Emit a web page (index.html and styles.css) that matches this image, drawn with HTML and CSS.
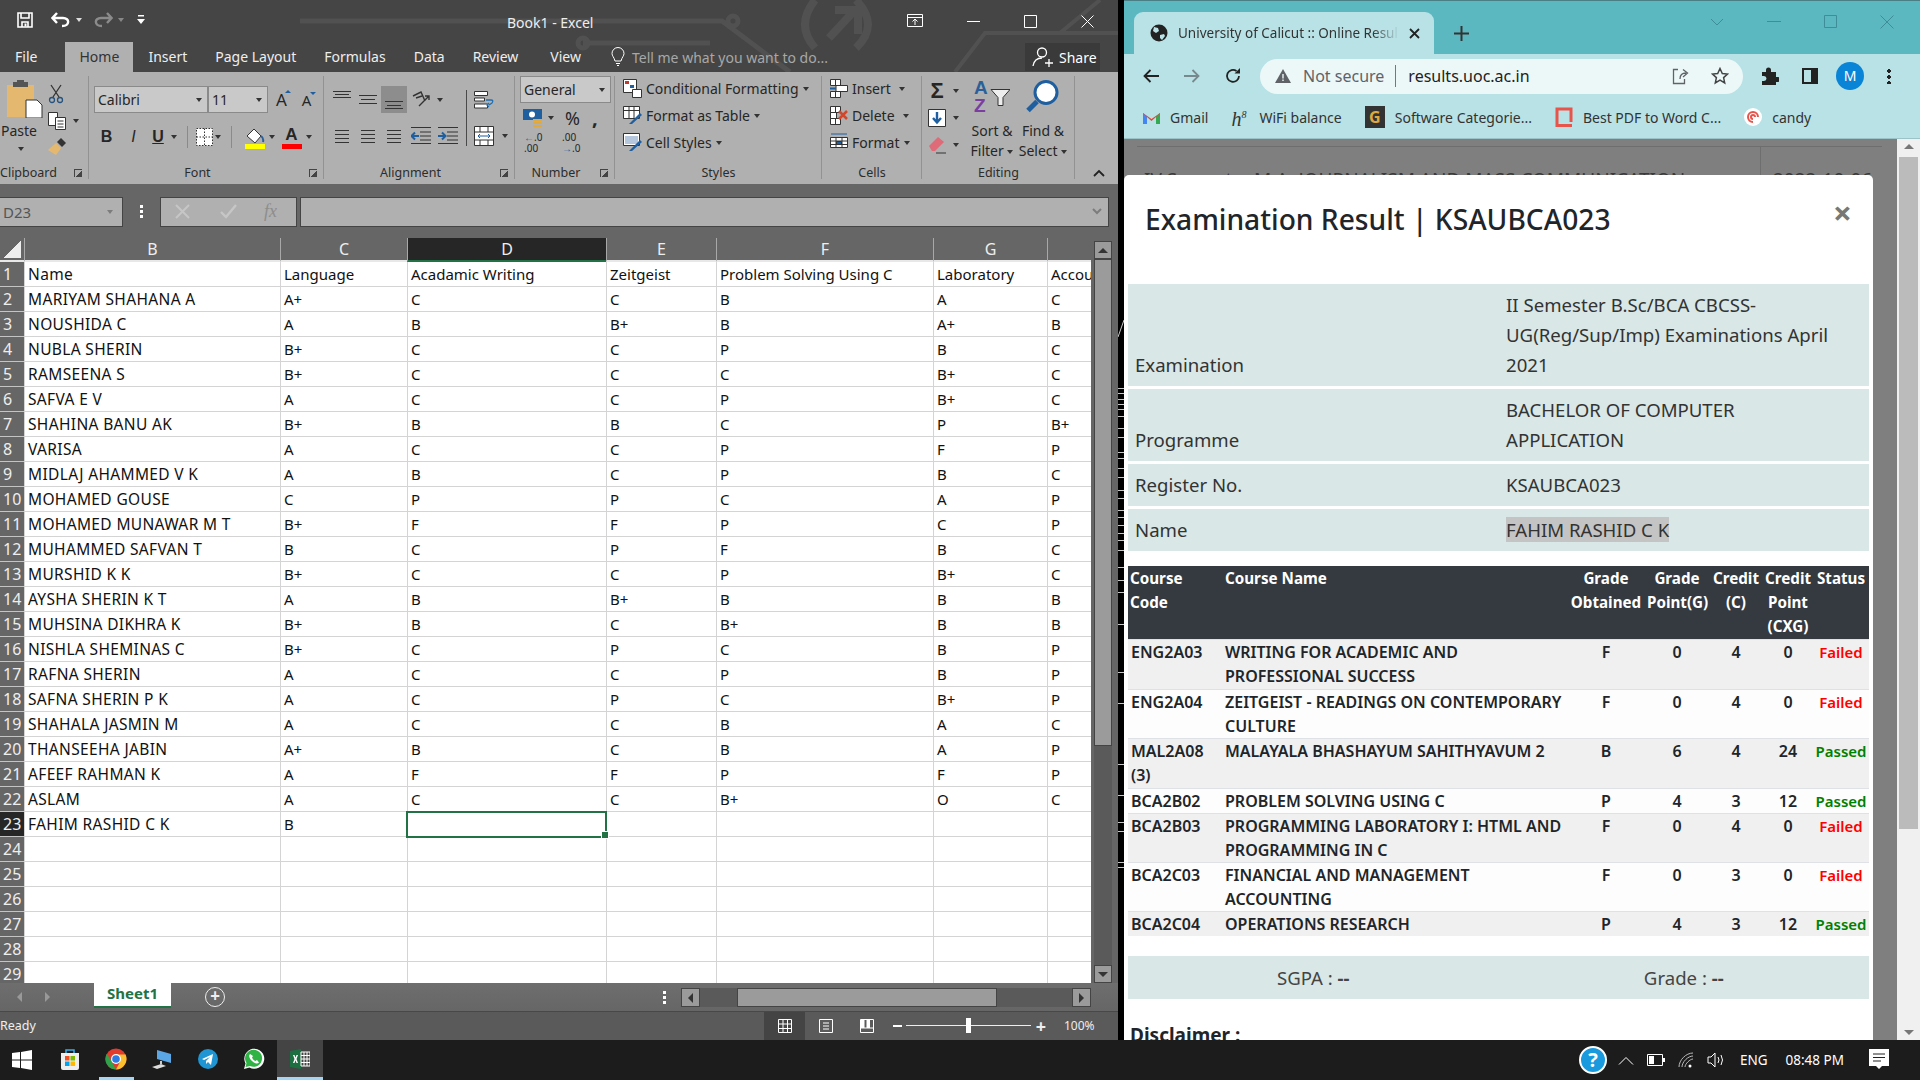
FILE: index.html
```html
<!DOCTYPE html>
<html lang="en">
<head>
  <meta charset="UTF-8">
  <title>Book1 - Excel</title>
  <link rel="stylesheet" href="styles.css">
</head>
<body>
  <div class="desktop">
    <div class="excel">
      <svg class="title-art" width="1118" height="72" viewBox="0 0 1118 72" fill="none" stroke="#515151" stroke-width="5">
        <path d="M300 21H722L790 72M733 21m-5 0a5 5 0 1 0 10 0a5 5 0 1 0-10 0M583 43H710M583 43m-5 0a5 5 0 1 0 10 0a5 5 0 1 0-10 0"/>
        <path d="M815 0Q795 25 815 48M856 0Q880 25 856 48M829 38L855 10M835 10H858V34" stroke-width="8"/>
        <path d="M955 72L985 33H1118M1060 33L1100 0" stroke-width="4"/>
      </svg>
      <div class="title-bar">
        <div class="qat">
          <svg width="18" height="18" viewBox="0 0 18 18" fill="none" stroke="#fff" stroke-width="1.6"><path d="M2 2H16V16H2zM5 2V7H13V2M6 16V11H12V16"/><path d="M8.500 12.500h2v3h-2z" fill="#fff" stroke="none"/></svg>
          <svg width="20" height="18" viewBox="0 0 20 18" fill="none" stroke="#fff" stroke-width="2.400"><path d="M2 7H12C19 7 19 15 11 15M6 2L1.500 7L6 12"/></svg>
          <span class="caret light"></span>
          <svg width="20" height="18" viewBox="0 0 20 18" fill="none" stroke="#8b8b8b" stroke-width="2.400"><path d="M18 7H8C1 7 1 15 9 15M14 2L18.500 7L14 12"/></svg>
          <span class="caret dim"></span>
          <svg width="8" height="10" viewBox="0 0 8 10" fill="#fff"><path d="M1 0h6v1.500H1zM0 4h8L4 9z"/></svg>
        </div>
        <div class="doc-title">Book1 - Excel</div>
        <div class="win-btns">
          <svg width="16" height="14" viewBox="0 0 16 14" fill="none" stroke="#fff"><path d="M.5.500h15v12H.5zM.5 3.500h15M8 11V5M5.500 7.500L8 5l2.500 2.500"/></svg>
          <svg width="13" height="3" viewBox="0 0 13 3" fill="#fff"><path d="M0 1h13v1H0z"/></svg>
          <svg width="13" height="13" viewBox="0 0 13 13" fill="none" stroke="#fff"><path d="M.5.500h12v12H.5z"/></svg>
          <svg width="13" height="13" viewBox="0 0 13 13" fill="none" stroke="#fff"><path d="M.5.500l12 12M12.500.500l-12 12"/></svg>
        </div>
      </div>
      <div class="tab-bar">
        <span class="tab file">File</span>
        <span class="tab active">Home</span>
        <span class="tab">Insert</span>
        <span class="tab">Page Layout</span>
        <span class="tab">Formulas</span>
        <span class="tab">Data</span>
        <span class="tab">Review</span>
        <span class="tab view">View</span>
        <span class="tell">
          <svg width="14" height="20" viewBox="0 0 14 20" fill="none" stroke="#fff"><path d="M4 14C3 10 1 9 1 6.500A6 6 0 0 1 13 6.500C13 9 11 10 10 14zM5 16.500h4M6 18.500h2"/></svg>
          Tell me what you want to do...
        </span>
        <span class="share">
          <svg width="22" height="22" viewBox="0 0 22 22" fill="none" stroke="#fff" stroke-width="1.300"><circle cx="10" cy="6.500" r="4.500"/><path d="M1 20C2 14 6 12 10 12M13 17h8M17 13v8"/></svg>
          Share
        </span>
      </div>

      <div class="ribbon">
        <section class="group clipboard">
          <div class="group-body">
            <div class="paste">
              <svg width="36" height="38" viewBox="0 0 36 38"><path d="M0 5H27V37H0z" fill="#e4b96f"/><path d="M6 2H21V7H6z" fill="#555"/><path d="M10 0h7v3h-7z" fill="#555"/><path d="M19 20H30L35 25V38H19z" fill="#fff" stroke="#333"/></svg>
              <span>Paste</span>
              <span class="caret"></span>
            </div>
            <div class="clip-tools">
              <svg width="16" height="20" viewBox="0 0 16 20" fill="none" stroke="#24527f" stroke-width="1.300"><path d="M3 1L11 13M13 1L5 13" stroke="#333"/><circle cx="4" cy="16" r="2.500"/><circle cx="12" cy="16" r="2.500"/></svg>
              <div class="with-caret">
                <svg width="18" height="18" viewBox="0 0 18 18" fill="#fff" stroke="#333"><path d="M.5.500h9v13h-9z"/><path d="M7.500 5.500h10v12h-10zM9.500 9h6M9.500 12h6M9.500 15h6"/></svg>
                <span class="caret"></span>
              </div>
              <svg width="18" height="18" viewBox="0 0 18 18"><path d="M0 12L8 5L13 10L8 17z" fill="#e4b96f"/><path d="M9 4L13 0L18 5L14 9z" fill="#333"/></svg>
            </div>
          </div>
          <div class="group-label">Clipboard<i class="launcher"></i></div>
        </section>

        <section class="group font">
          <div class="group-body rows">
            <div class="row">
              <span class="select font-name">Calibri<span class="caret"></span></span>
              <span class="select font-size">11<span class="caret"></span></span>
              <span class="grow-a">A<i></i></span>
              <span class="grow-a small">A<i></i></span>
            </div>
            <div class="row row-two">
              <b class="fmt">B</b>
              <i class="fmt">I</i>
              <u class="fmt">U</u>
              <span class="caret"></span>
              <span class="rule"></span>
              <svg width="17" height="18" viewBox="0 0 17 18" fill="#fff" stroke="#333" stroke-dasharray="1.500 1.500"><path d="M.5.500h16v17H.5zM8.500.500v17M.5 9h16"/></svg>
              <span class="caret"></span>
              <span class="rule wide"></span>
              <span class="swatch-icon">
                <svg width="20" height="16" viewBox="0 0 20 16"><path d="M2 8L9 1L16 8L10 15z" fill="#fff" stroke="#333"/><path d="M16 8q3 2 2 6" fill="none" stroke="#2a6099" stroke-width="2"/></svg>
                <i class="swatch yellow"></i>
              </span>
              <span class="caret"></span>
              <span class="swatch-icon">
                <span class="color-a">A</span>
                <i class="swatch red"></i>
              </span>
              <span class="caret"></span>
            </div>
          </div>
          <div class="group-label">Font<i class="launcher"></i></div>
        </section>

        <section class="group alignment">
          <div class="group-body align-grid">
            <span class="lines top"></span>
            <span class="lines middle"></span>
            <span class="lines bottom on"></span>
            <svg width="20" height="18" viewBox="0 0 20 18" fill="none" stroke="#333" stroke-width="1.400"><path d="M2 5L10 1L14 10M5 7L11 5M8 15L18 5M14 5h4v4"/></svg>
            <span class="caret orient-caret"></span>
            <span class="sep"></span>
            <svg width="20" height="18" viewBox="0 0 20 18" fill="#fff" stroke="#333"><path d="M.5.500h13v4H.5zM.5 7h10v3H.5zM.5 13h13v4H.5z"/><path d="M12 9h5q3 0 1 3l-3 2M15 12l-2 2 2 2" fill="none" stroke="#1f6fb2" stroke-width="1.300"/></svg>
            <span></span>
            <span class="lines left"></span>
            <span class="lines center"></span>
            <span class="lines right"></span>
            <svg width="20" height="17" viewBox="0 0 20 17" fill="none" stroke="#333"><path d="M0 .500h20M9 5h11M9 9h11M9 13h11M0 16.500h20"/><path d="M8 9H1M4 5.500L.5 9 4 12.500" stroke="#1f5f9f" stroke-width="2"/></svg>
            <svg width="20" height="17" viewBox="0 0 20 17" fill="none" stroke="#333"><path d="M0 .500h20M9 5h11M9 9h11M9 13h11M0 16.500h20"/><path d="M0 9h7M4 5.500L7.500 9 4 12.500" stroke="#1f5f9f" stroke-width="2"/></svg>
            <svg width="20" height="20" viewBox="0 0 20 20" fill="#fff" stroke="#333"><path d="M.5.500h19v19H.5zM.5 6h19M.5 14h19M6 .500V6M14 .500V6M6 14v5.500M14 14v5.500"/><path d="M4 10h12M6 8l-2 2 2 2M14 8l2 2-2 2" fill="none" stroke="#1f5f9f"/></svg>
            <span class="caret"></span>
          </div>
          <div class="group-label">Alignment<i class="launcher"></i></div>
        </section>

        <section class="group number">
          <div class="group-body rows">
            <span class="select general">General<span class="caret"></span></span>
            <div class="row num-row">
              <svg width="20" height="18" viewBox="0 0 20 18"><path d="M0 0H19V11H0z" fill="#1f5f9f"/><circle cx="9" cy="5.500" r="3" fill="#fff"/><path d="M10 10h9v2h-9zM10 13h9v2h-9zM10 16h9v2h-9z" fill="#e0a93f"/></svg>
              <span class="caret"></span>
              <span class="percent">%</span>
              <span class="comma">,</span>
            </div>
            <div class="row dec-row">
              <span class="dec"><em>←</em>.0<br>.00</span>
              <span class="dec">.00<br><em>→</em>.0</span>
            </div>
          </div>
          <div class="group-label">Number<i class="launcher"></i></div>
        </section>

        <section class="group styles">
          <div class="group-body list">
            <div class="list-item">
              <svg width="19" height="19" viewBox="0 0 19 19" fill="#fff" stroke="#333"><path d="M.5.500h13v13H.5z"/><path d="M2 2h4v3H2z" fill="#c0392b" stroke="none"/><path d="M7 6h4v3H7z" fill="#1f5f9f" stroke="none"/><path d="M9.500 10.500h9v8h-9z"/></svg>
              Conditional Formatting <span class="caret"></span>
            </div>
            <div class="list-item">
              <svg width="19" height="19" viewBox="0 0 19 19" fill="#fff" stroke="#333"><path d="M.5.500h16v12H.5zM.5 4.500h16M6 .500v12M11 .500v12"/><path d="M6 18L17 7l2 2L9 18z" fill="#1f5f9f" stroke="none"/></svg>
              Format as Table <span class="caret"></span>
            </div>
            <div class="list-item">
              <svg width="19" height="19" viewBox="0 0 19 19" fill="#fff" stroke="#333"><path d="M.5.500h16v12H.5z"/><path d="M2 3h13v8H2z" fill="#b4c7dd" stroke="none"/><path d="M6 18L17 7l2 2L9 18z" fill="#1f5f9f" stroke="none"/></svg>
              Cell Styles <span class="caret"></span>
            </div>
          </div>
          <div class="group-label">Styles</div>
        </section>

        <section class="group cells">
          <div class="group-body list">
            <div class="list-item">
              <svg width="18" height="19" viewBox="0 0 18 19" fill="#fff" stroke="#333"><path d="M.5.500h10v6H.5zM.5 12.500h10v6H.5zM5.500.500v6M5.500 12.500v6M6 6.500h11.500v6H6z"/><path d="M0 9.500h6" stroke="#1f5f9f" stroke-width="2"/></svg>
              Insert <span class="caret gap"></span>
            </div>
            <div class="list-item">
              <svg width="18" height="19" viewBox="0 0 18 19" fill="#fff" stroke="#333"><path d="M.5.500h10v6H.5zM.5 12.500h10v6H.5zM5.500.500v6M5.500 12.500v6M.5 6.500h6v6h-6z"/><path d="M9 5l8 8M17 5l-8 8" stroke="#d0472b" stroke-width="2.500"/></svg>
              Delete <span class="caret gap"></span>
            </div>
            <div class="list-item">
              <svg width="18" height="19" viewBox="0 0 18 19" fill="#fff" stroke="#333"><path d="M.5 4.500h17v10H.5zM.5 8h17M.5 11.500h17M6 4.500v10M12 4.500v10"/><path d="M6.500 8.500h5v3h-5z" fill="#1f5f9f"/><path d="M1 1h16" stroke="#1f5f9f"/></svg>
              Format <span class="caret"></span>
            </div>
          </div>
          <div class="group-label">Cells</div>
        </section>

        <section class="group editing">
          <div class="group-body edit-body">
            <div class="edit-tools">
              <div class="with-caret"><span class="sigma">Σ</span><span class="caret"></span></div>
              <div class="with-caret">
                <svg width="18" height="18" viewBox="0 0 18 18"><path d="M.5.500h17v17H.5z" fill="#fff" stroke="#333"/><path d="M9 3v10M5 9l4 4.500L13 9" fill="none" stroke="#1f5f9f" stroke-width="2.400"/></svg>
                <span class="caret"></span>
              </div>
              <div class="with-caret">
                <svg width="18" height="18" viewBox="0 0 18 18"><path d="M1 10L10 1l6 5-9 9H4z" fill="#df6a78"/><path d="M8 17h10" stroke="#333"/></svg>
                <span class="caret"></span>
              </div>
            </div>
            <div class="big-tool sort">
              <svg width="36" height="34" viewBox="0 0 36 34"><text x="0" y="14" class="az a">A</text><text x="0" y="32" class="az z">Z</text><path d="M17 10H36L29 18V26H24V18z" fill="#eee" stroke="#333"/></svg>
              <span>Sort &amp;</span>
              <span>Filter <i class="caret"></i></span>
            </div>
            <div class="big-tool find">
              <svg width="34" height="34" viewBox="0 0 34 34" fill="none"><circle cx="20" cy="13" r="11" fill="#fff" stroke="#1f5f9f" stroke-width="3"/><path d="M11 22L2 31" stroke="#1f5f9f" stroke-width="5"/></svg>
              <span>Find &amp;</span>
              <span>Select <i class="caret"></i></span>
            </div>
          </div>
          <div class="group-label">Editing</div>
        </section>
        <svg class="collapse" width="12" height="8" viewBox="0 0 12 8" fill="none" stroke="#222" stroke-width="1.800"><path d="M1 7l5-5 5 5"/></svg>
      </div>

      <div class="formula-bar">
        <div class="name-box">D23<span class="caret dark"></span></div>
        <span class="vdots"></span>
        <div class="fx-btns">
          <svg width="15" height="15" viewBox="0 0 15 15" fill="none" stroke="#c6c6c6" stroke-width="2"><path d="M1 1l13 13M14 1L1 14"/></svg>
          <svg width="17" height="15" viewBox="0 0 17 15" fill="none" stroke="#c6c6c6" stroke-width="2.400"><path d="M1 8l5 5L16 1"/></svg>
          <span class="fx">fx</span>
        </div>
        <div class="formula-input">
          <svg width="10" height="7" viewBox="0 0 10 7" fill="none" stroke="#7c7c7c" stroke-width="2"><path d="M1 1l4 4 4-4"/></svg>
        </div>
      </div>

      <div class="sheet">
        <div class="grid-wrap">
          <table class="grid">
            <colgroup>
              <col class="c-hd"><col class="c-b"><col class="c-c"><col class="c-d"><col class="c-e"><col class="c-f"><col class="c-g"><col class="c-h">
            </colgroup>
            <thead>
              <tr><th class="corner"></th><th>B</th><th>C</th><th class="cur">D</th><th>E</th><th>F</th><th>G</th><th></th></tr>
            </thead>
            <tbody>
              <tr class="heads"><th>1</th><td>Name</td><td>Language</td><td>Acadamic Writing</td><td>Zeitgeist</td><td>Problem Solving Using C</td><td>Laboratory</td><td>Accounting</td></tr>
              <tr><th>2</th><td>MARIYAM SHAHANA A</td><td>A+</td><td>C</td><td>C</td><td>B</td><td>A</td><td>C</td></tr>
              <tr><th>3</th><td>NOUSHIDA C</td><td>A</td><td>B</td><td>B+</td><td>B</td><td>A+</td><td>B</td></tr>
              <tr><th>4</th><td>NUBLA SHERIN</td><td>B+</td><td>C</td><td>C</td><td>P</td><td>B</td><td>C</td></tr>
              <tr><th>5</th><td>RAMSEENA S</td><td>B+</td><td>C</td><td>C</td><td>C</td><td>B+</td><td>C</td></tr>
              <tr><th>6</th><td>SAFVA E V</td><td>A</td><td>C</td><td>C</td><td>P</td><td>B+</td><td>C</td></tr>
              <tr><th>7</th><td>SHAHINA BANU AK</td><td>B+</td><td>B</td><td>B</td><td>C</td><td>P</td><td>B+</td></tr>
              <tr><th>8</th><td>VARISA</td><td>A</td><td>C</td><td>C</td><td>P</td><td>F</td><td>P</td></tr>
              <tr><th>9</th><td>MIDLAJ AHAMMED V K</td><td>A</td><td>B</td><td>C</td><td>P</td><td>B</td><td>C</td></tr>
              <tr><th>10</th><td>MOHAMED GOUSE</td><td>C</td><td>P</td><td>P</td><td>C</td><td>A</td><td>P</td></tr>
              <tr><th>11</th><td>MOHAMED MUNAWAR M T</td><td>B+</td><td>F</td><td>F</td><td>P</td><td>C</td><td>P</td></tr>
              <tr><th>12</th><td>MUHAMMED SAFVAN T</td><td>B</td><td>C</td><td>P</td><td>F</td><td>B</td><td>C</td></tr>
              <tr><th>13</th><td>MURSHID K K</td><td>B+</td><td>C</td><td>C</td><td>P</td><td>B+</td><td>C</td></tr>
              <tr><th>14</th><td>AYSHA SHERIN K T</td><td>A</td><td>B</td><td>B+</td><td>B</td><td>B</td><td>B</td></tr>
              <tr><th>15</th><td>MUHSINA DIKHRA K</td><td>B+</td><td>B</td><td>C</td><td>B+</td><td>B</td><td>B</td></tr>
              <tr><th>16</th><td>NISHLA SHEMINAS C</td><td>B+</td><td>C</td><td>P</td><td>C</td><td>B</td><td>P</td></tr>
              <tr><th>17</th><td>RAFNA SHERIN</td><td>A</td><td>C</td><td>C</td><td>P</td><td>B</td><td>P</td></tr>
              <tr><th>18</th><td>SAFNA SHERIN P K</td><td>A</td><td>C</td><td>P</td><td>C</td><td>B+</td><td>P</td></tr>
              <tr><th>19</th><td>SHAHALA JASMIN M</td><td>A</td><td>C</td><td>C</td><td>B</td><td>A</td><td>C</td></tr>
              <tr><th>20</th><td>THANSEEHA JABIN</td><td>A+</td><td>B</td><td>C</td><td>B</td><td>A</td><td>P</td></tr>
              <tr><th>21</th><td>AFEEF RAHMAN K</td><td>A</td><td>F</td><td>F</td><td>P</td><td>F</td><td>P</td></tr>
              <tr><th>22</th><td>ASLAM</td><td>A</td><td>C</td><td>C</td><td>B+</td><td>O</td><td>C</td></tr>
              <tr><th class="cur">23</th><td>FAHIM RASHID C K</td><td>B</td><td class="selected"></td><td></td><td></td><td></td><td></td></tr>
              <tr><th>24</th><td></td><td></td><td></td><td></td><td></td><td></td><td></td></tr>
              <tr><th>25</th><td></td><td></td><td></td><td></td><td></td><td></td><td></td></tr>
              <tr><th>26</th><td></td><td></td><td></td><td></td><td></td><td></td><td></td></tr>
              <tr><th>27</th><td></td><td></td><td></td><td></td><td></td><td></td><td></td></tr>
              <tr><th>28</th><td></td><td></td><td></td><td></td><td></td><td></td><td></td></tr>
              <tr><th>29</th><td></td><td></td><td></td><td></td><td></td><td></td><td></td></tr>
            </tbody>
          </table>
        </div>
        <div class="vscroll">
          <span class="sb-btn"><i class="tri up"></i></span>
          <span class="sb-thumb"></span>
          <span class="sb-btn"><i class="tri down"></i></span>
        </div>
      </div>

      <div class="sheet-tabs">
        <span class="nav-arrows"><i class="tri left dim"></i><i class="tri right dim"></i></span>
        <span class="sheet-tab">Sheet1</span>
        <span class="add-sheet">+</span>
        <span class="vdots tabs-dots"></span>
        <div class="hscroll">
          <span class="sb-btn"><i class="tri left"></i></span>
          <span class="hs-track"><span class="hs-thumb"></span></span>
          <span class="sb-btn"><i class="tri right"></i></span>
        </div>
      </div>

      <div class="status-bar">
        <span class="ready">Ready</span>
        <span class="view-btn on"><svg width="14" height="14" viewBox="0 0 14 14" fill="none" stroke="#fff"><path d="M.5.500h13v13H.5zM.5 5h13M.5 9.500h13M5 .500v13M9.500 .500v13"/></svg></span>
        <span class="view-btn"><svg width="14" height="14" viewBox="0 0 14 14" fill="none" stroke="#fff"><path d="M.5.500h13v13H.5zM4 4h6M4 7h6M4 10h6"/></svg></span>
        <span class="view-btn"><svg width="14" height="14" viewBox="0 0 14 14" fill="none" stroke="#fff"><path d="M.5.500h13v13H.5zM.5 9h13"/><path d="M1 1h3.500v8H1zM6.500 1H10v8H6.500z" fill="#fff" stroke="none"/></svg></span>
        <span class="zoom-minus"></span>
        <span class="zoom-track"><i></i></span>
        <span class="zoom-plus">+</span>
        <span class="zoom-pct">100%</span>
      </div>
    </div>

    <svg class="edge" width="6" height="1040" viewBox="0 0 6 1040" stroke="#c8c8c8"><path d="M0 388.500h6M0 393.500h6M0 399.500h6M0 404.500h6M0 409.500h6M0 416.500h6M0 428.500h6M0 437.500h6M0 452.500h6M0 458.500h6M0 468.500h6M0 477.500h6M0 490.500h6M0 498.500h6M0 510.500h6M0 517.500h6M0 525.500h6M0 533.500h6M0 540.500h6M0 550.500h6M0 567.500h6M0 580.500h6M0 592.500h6M0 624.500h6M0 672.500h6M0 703.500h6M0 764.500h6M0 795.500h6M0 822.500h6M0 831.500h6M0 862.500h6M0 867.500h6M0 337L6 320" fill="none"/></svg>

    <div class="chrome">
      <div class="tab-strip">
        <div class="c-tab">
          <svg width="18" height="18" viewBox="0 0 18 18"><circle cx="9" cy="9" r="8.500" fill="#222"/><path d="M4 3l4 1 1 3-3 2-3-2zM10 11l4-1 1 2-3 4-2-2z" fill="#b8e2e6"/></svg>
          <span class="c-tab-title">University of Calicut :: Online Results</span>
          <svg width="11" height="11" viewBox="0 0 11 11" stroke="#222" stroke-width="1.800"><path d="M1 1l9 9M10 1l-9 9"/></svg>
        </div>
        <svg class="new-tab" width="15" height="15" viewBox="0 0 15 15" stroke="#333" stroke-width="2"><path d="M7.500 0v15M0 7.500h15"/></svg>
        <div class="c-win">
          <svg width="14" height="8" viewBox="0 0 14 8" fill="none" stroke="#3f8d96"><path d="M1 1l6 6 6-6"/></svg>
          <svg width="14" height="2" viewBox="0 0 14 2" fill="#3f8d96"><path d="M0 0h14v1H0z"/></svg>
          <svg width="13" height="13" viewBox="0 0 13 13" fill="none" stroke="#3f8d96"><path d="M.5.500h12v12H.5z"/></svg>
          <svg width="14" height="14" viewBox="0 0 14 14" fill="none" stroke="#3f8d96"><path d="M.5.500l13 13M13.500.500l-13 13"/></svg>
        </div>
      </div>
      <div class="toolbar">
        <svg width="16" height="14" viewBox="0 0 16 14" fill="none" stroke="#222" stroke-width="1.800"><path d="M16 7H2M7.500 1L1.500 7l6 6"/></svg>
        <svg width="16" height="14" viewBox="0 0 16 14" fill="none" stroke="#77898c" stroke-width="1.800"><path d="M0 7h14M8.500 1l6 6-6 6"/></svg>
        <svg width="16" height="16" viewBox="0 0 16 16" fill="none" stroke="#222" stroke-width="1.800"><path d="M14 8A6 6 0 1 1 11.500 3"/><path d="M9.500 5.500h5.500V0z" fill="#222" stroke="none"/></svg>
        <div class="omnibox">
          <svg width="16" height="14" viewBox="0 0 16 14"><path d="M8 0l8 14H0z" fill="#5f6368"/><path d="M7.300 5h1.400v4.500H7.300zM7.300 10.500h1.400V12H7.300z" fill="#ecf8f8"/></svg>
          <span class="not-secure">Not secure</span>
          <span class="url">results.uoc.ac.in</span>
          <span class="omni-icons">
            <svg width="17" height="17" viewBox="0 0 17 17" fill="none" stroke="#5f6368" stroke-width="1.300"><path d="M6 1.500H1.500v14h11V11M8 11c0-5 3-6 6-6M11 1.500L15.500 5 11 9"/></svg>
            <svg width="18" height="18" viewBox="0 0 18 18" fill="none" stroke="#444" stroke-width="1.500"><path d="M9 1.500l2.300 5 5.200.6-3.900 3.500 1.100 5.300L9 13.200l-4.700 2.700 1.100-5.300L1.500 7.100l5.200-.6z"/></svg>
          </span>
        </div>
        <svg class="first-ext" width="18" height="18" viewBox="0 0 18 18" fill="#222"><path d="M1 5h4V3a2.500 2.500 0 0 1 5 0v2h5v5h2a2.500 2.500 0 0 1 0 5h-2v3H1v-4h2a2.500 2.500 0 0 0 0-5H1z"/></svg>
        <svg width="16" height="16" viewBox="0 0 16 16" fill="none" stroke="#222" stroke-width="2"><path d="M1 1h14v14H1z"/><path d="M10 1h5v14h-5z" fill="#222"/></svg>
        <span class="avatar">M</span>
        <span class="menu-dots"></span>
      </div>
      <div class="bookmarks">
        <span class="bm"><svg width="17" height="13" viewBox="0 0 17 13"><path d="M0 2L8.500 8 17 2v11h-4V6L8.500 10 4 6v7H0z" fill="#ea4335"/><path d="M0 2v11h4V6z" fill="#4285f4"/><path d="M13 6v7h4V2z" fill="#34a853"/></svg>Gmail</span>
        <span class="bm"><span class="h8">h<sup>8</sup></span>WiFi balance</span>
        <span class="bm"><span class="g-ico">G</span>Software Categorie...</span>
        <span class="bm"><svg width="18" height="20" viewBox="0 0 18 20" fill="none" stroke="#e8534a" stroke-width="3"><path d="M17 18.500H2V2h14v13"/></svg>Best PDF to Word C...</span>
        <span class="bm"><svg width="18" height="18" viewBox="0 0 18 18" fill="none"><circle cx="9" cy="9" r="9" fill="#fff"/><path d="M9 14A5 5 0 1 1 14 9M9 11a2 2 0 1 1 2-2" stroke="#e8534a" stroke-width="2"/></svg>candy</span>
      </div>
      <div class="page">
        <div class="behind"><span class="behind-sem">IV Semester</span><span>M.A. JOURNALISM AND MASS COMMUNICATION</span><span class="behind-date">2022-10-06</span></div>
        <div class="modal">
          <div class="modal-head">
            <h1>Examination Result | KSAUBCA023</h1>
            <span class="modal-close">×</span>
          </div>
          <div class="info">
            <div class="info-row"><span>Examination</span><span>II Semester B.Sc/BCA CBCSS-UG(Reg/Sup/Imp) Examinations April 2021</span></div>
            <div class="info-row"><span>Programme</span><span>BACHELOR OF COMPUTER APPLICATION</span></div>
            <div class="info-row"><span>Register No.</span><span>KSAUBCA023</span></div>
            <div class="info-row"><span>Name</span><span><mark>FAHIM RASHID C K</mark></span></div>
          </div>
          <table class="marks">
            <colgroup>
              <col class="m-code"><col class="m-name"><col class="m-grade"><col class="m-point"><col class="m-credit"><col class="m-cxg"><col class="m-status">
            </colgroup>
            <thead>
              <tr><th>Course Code</th><th>Course Name</th><th class="mid">Grade Obtained</th><th class="mid">Grade Point(G)</th><th class="mid">Credit (C)</th><th class="mid">Credit Point (CXG)</th><th class="mid">Status</th></tr>
            </thead>
            <tbody>
              <tr class="tall"><td>ENG2A03</td><td>WRITING FOR ACADEMIC AND PROFESSIONAL SUCCESS</td><td class="mid">F</td><td class="mid">0</td><td class="mid">4</td><td class="mid">0</td><td class="mid fail">Failed</td></tr>
              <tr><td>ENG2A04</td><td>ZEITGEIST - READINGS ON CONTEMPORARY CULTURE</td><td class="mid">F</td><td class="mid">0</td><td class="mid">4</td><td class="mid">0</td><td class="mid fail">Failed</td></tr>
              <tr class="tall"><td>MAL2A08 (3)</td><td>MALAYALA BHASHAYUM SAHITHYAVUM 2</td><td class="mid">B</td><td class="mid">6</td><td class="mid">4</td><td class="mid">24</td><td class="mid pass">Passed</td></tr>
              <tr><td>BCA2B02</td><td>PROBLEM SOLVING USING C</td><td class="mid">P</td><td class="mid">4</td><td class="mid">3</td><td class="mid">12</td><td class="mid pass">Passed</td></tr>
              <tr><td>BCA2B03</td><td>PROGRAMMING LABORATORY I: HTML AND PROGRAMMING IN C</td><td class="mid">F</td><td class="mid">0</td><td class="mid">4</td><td class="mid">0</td><td class="mid fail">Failed</td></tr>
              <tr><td>BCA2C03</td><td>FINANCIAL AND MANAGEMENT ACCOUNTING</td><td class="mid">F</td><td class="mid">0</td><td class="mid">3</td><td class="mid">0</td><td class="mid fail">Failed</td></tr>
              <tr><td>BCA2C04</td><td>OPERATIONS RESEARCH</td><td class="mid">P</td><td class="mid">4</td><td class="mid">3</td><td class="mid">12</td><td class="mid pass">Passed</td></tr>
            </tbody>
          </table>
          <div class="sgpa"><span>SGPA : <b>--</b></span><span>Grade : <b>--</b></span></div>
          <h2 class="disclaimer">Disclaimer :</h2>
        </div>
        <div class="page-scroll">
          <i class="tri up grey"></i>
          <span class="page-thumb"></span>
          <i class="tri down grey"></i>
        </div>
      </div>
    </div>
  </div>

  <div class="taskbar">
    <svg class="start" width="20" height="20" viewBox="0 0 20 20" fill="#fff"><path d="M0 3l8-1v7.500H0zM9 2l11-2v9.500H9zM0 10.500h8V18l-8-1zM9 10.500h11V20L9 18z"/></svg>
    <span class="task"><svg width="20" height="22" viewBox="0 0 20 22"><path d="M1 5h18v15a2 2 0 0 1-2 2H3a2 2 0 0 1-2-2z" fill="#eee"/><path d="M6 5V2h8v3" fill="none" stroke="#3ab0ea" stroke-width="1.500"/><path d="M5 8h4.500v4.500H5z" fill="#f25022"/><path d="M10.500 8H15v4.500h-4.500z" fill="#7fba00"/><path d="M5 13.500h4.500V18H5z" fill="#00a4ef"/><path d="M10.500 13.500H15V18h-4.500z" fill="#ffb900"/></svg></span>
    <span class="task open"><svg width="22" height="22" viewBox="0 0 22 22"><circle cx="11" cy="11" r="10.500" fill="#e33b2e"/><path d="M11 21.500A10.500 10.500 0 0 1 1.800 5.800L7 14z" fill="#2fa24b"/><path d="M11 21.500A10.500 10.500 0 0 0 20.500 6.500H11L15 14z" fill="#fbc02d"/><circle cx="11" cy="11" r="5" fill="#fff"/><circle cx="11" cy="11" r="3.800" fill="#2f7be5"/></svg></span>
    <span class="task"><svg width="22" height="22" viewBox="0 0 22 22"><path d="M6 2L20 6V15L6 11z" fill="#5ba7e6"/><path d="M1 19l9-3 5 2-9 3z" fill="#ddd"/><path d="M10 13v3" stroke="#ccc" stroke-width="2"/></svg></span>
    <span class="task"><svg width="20" height="20" viewBox="0 0 20 20"><circle cx="10" cy="10" r="10" fill="#1f96d3"/><path d="M4 10l11-5-2 11-3-3-2 2v-3l4-4-6 3z" fill="#fff"/></svg></span>
    <span class="task"><svg width="22" height="22" viewBox="0 0 22 22"><path d="M1 21l1.500-5.500A10 10 0 1 1 6.500 19.500z" fill="#fff"/><path d="M2.500 19l1-4A8.500 8.500 0 1 1 7 18z" fill="#2fb344"/><path d="M7 6c-2 2 0 5 2 7s5 3.500 7 1.500l-2-2.500-1.500 1c-1.500-.5-3-2-3.500-3.500l1-1.500z" fill="#fff"/></svg></span>
    <span class="task active"><svg width="20" height="20" viewBox="0 0 20 20"><path d="M0 2l11-2v20L0 18z" fill="#1d6f42"/><path d="M11 3h9v14h-9zM14 3v14M17 3v14M11 6.500h9M11 10h9M11 13.500h9" fill="none" stroke="#fff"/><path d="M3 6l1.500 4L3 14h1.500l1-2.800 1 2.800H8L6.500 10 8 6H6.500l-1 2.800L4.500 6z" fill="#fff"/></svg></span>
    <div class="tray">
      <span class="help">?</span>
      <svg width="16" height="9" viewBox="0 0 16 9" fill="none" stroke="#fff"><path d="M1 8.500l7-7 7 7"/></svg>
      <svg width="18" height="12" viewBox="0 0 18 12" fill="none" stroke="#fff"><path d="M.5.500h15v11H.5z"/><path d="M2 2h5v8H2z" fill="#fff" stroke="none"/><path d="M17 4v4" stroke-width="2"/></svg>
      <svg width="16" height="16" viewBox="0 0 16 16" fill="none" stroke="#bbb"><path d="M1 15C1 8 8 1 15 1M4 15C4 10 10 4 15 4M7 15C7 12 12 7 15 7"/><circle cx="12" cy="14" r="1.500" fill="#fff" stroke="none"/></svg>
      <svg width="20" height="16" viewBox="0 0 20 16" fill="none" stroke="#fff"><path d="M1 5h3l4-4v14l-4-4H1zM11 5q2 3 0 6M14 3q3 5 0 10"/></svg>
      <span class="eng">ENG</span>
      <span class="clock">08:48 PM</span>
      <svg class="notif" width="20" height="22" viewBox="0 0 20 22"><path d="M0 0H20V17H13L10 20 7 17H0z" fill="#fff"/><path d="M4 5h12M4 8.500h12M4 12h8" stroke="#222"/></svg>
    </div>
  </div>
</body>
</html>
```

FILE: styles.css
```css
* {
  box-sizing: border-box;
}

html, body {
  margin: 0;
  height: 100%;
}

body {
  width: 1920px;
  height: 1080px;
  overflow: hidden;
  display: flex;
  flex-direction: column;
  background: #000;
  font-family: "Noto Sans", "Open Sans", sans-serif;
}

svg {
  flex: none;
}

.desktop {
  height: 1040px;
  display: flex;
}

/* Excel */
.excel {
  position: relative;
  width: 1118px;
  display: flex;
  flex-direction: column;
  background: #666;
}

.excel::before {
  content: "";
  position: absolute;
  left: 0;
  top: 0;
  width: 100%;
  height: 72px;
  background: #454545;
}

.title-art {
  position: absolute;
  left: 0;
  top: 0;
}

.edge {
  background: #000;
}

.title-bar {
  position: relative;
  height: 42px;
  display: flex;
  align-items: center;
  color: #eee;
}

.qat {
  width: 460px;
  display: flex;
  align-items: center;
  padding: 0 0 2px 16px;
  gap: 5px;
}

.qat svg:nth-child(2) {
  margin-left: 12px;
}

.qat svg:nth-child(4) {
  margin-left: 6px;
}

.qat svg:last-child {
  margin-left: 8px;
}

.doc-title {
  width: 180px;
  padding: 2px 0 0 47px;
  font-size: 14px;
  white-space: nowrap;
}

.win-btns {
  margin-left: auto;
  display: flex;
  align-items: center;
  gap: 44px;
  padding-right: 24px;
}

.tab-bar {
  position: relative;
  height: 30px;
  display: flex;
  align-items: center;
  color: #eee;
  font-size: 14px;
}

.tab {
  padding: 0 14px;
  line-height: 30px;
  height: 30px;
}

.tab.file {
  padding: 0 15px;
  margin-right: 13px;
}

.tab.active {
  padding: 0;
  background: #b0b0b0;
  color: #333;
  width: 68px;
  text-align: center;
  margin-right: 1px;
}

.tab.view {
  margin-left: 4px;
}

.tell {
  display: flex;
  align-items: center;
  gap: 7px;
  margin-left: 16px;
  color: #a8a8a8;
}

.share {
  margin-left: auto;
  margin-right: 18px;
  width: 75px;
  height: 28px;
  display: flex;
  align-items: center;
  gap: 5px;
  padding-left: 7px;
  background: #3a3a3a;
  color: #fff;
}

.ribbon {
  position: relative;
  height: 112px;
  display: flex;
  background: #b0b0b0;
  color: #262626;
  font-size: 14px;
}

.group {
  flex: none;
  display: flex;
  flex-direction: column;
  padding-top: 4px;
  position: relative;
}

.group::after {
  content: "";
  position: absolute;
  right: 0;
  top: 4px;
  bottom: 5px;
  width: 1px;
  background: #929292;
}

.clipboard { width: 89px; }
.font { width: 235px; }
.alignment { width: 191px; }
.number { width: 100px; }
.styles { width: 207px; }
.cells { width: 100px; }
.editing { width: 153px; }

.group-body {
  flex: 1;
  display: flex;
  min-height: 0;
}

.group-label {
  position: relative;
  height: 21px;
  text-align: center;
  font-size: 12.500px;
  line-height: 20px;
  color: #2c2c2c;
}

.font .group-label, .alignment .group-label, .number .group-label {
  padding-right: 18px;
}

.clipboard .group-label {
  text-align: left;
}

.launcher {
  position: absolute;
  right: 7px;
  top: 6px;
  width: 8px;
  height: 8px;
  border: 1px solid #444;
  border-width: 1px 0 0 1px;
  background: linear-gradient(135deg, transparent 55%, #444 55%);
}

.caret {
  display: inline-block;
  flex: none;
  width: 0;
  height: 0;
  border: 3.500px solid transparent;
  border-top: 4px solid #333;
  border-bottom: 0;
}

.caret.light { border-top-color: #ddd; }
.caret.dim { border-top-color: #888; }
.caret.dark { border-top-color: #7c7c7c; }
.caret.gap { margin-left: 4px; }

.paste {
  width: 50px;
  display: flex;
  flex-direction: column;
  align-items: center;
  padding-top: 4px;
  line-height: 20px;
}

.paste span:nth-child(2) {
  margin-top: 3px;
  width: 40px;
  margin-left: -8px;
}

.paste .caret {
  margin: 6px 0 0 -8px;
}

.clip-tools {
  width: 38px;
  display: flex;
  flex-direction: column;
  gap: 8px;
  padding: 8px 0 0 0;
  margin-left: -2px;
  align-items: flex-start;
}

.with-caret {
  display: flex;
  align-items: center;
  gap: 7px;
}

.rows {
  flex-direction: column;
}

.row {
  display: flex;
  align-items: center;
}

.font .row:first-child {
  padding: 10px 0 0 5px;
}

.select {
  height: 27px;
  display: flex;
  align-items: center;
  justify-content: space-between;
  padding: 0 5px 0 3px;
  background: #c9c9c9;
  border: 1px solid #8a8a8a;
}

.font-name { width: 114px; }
.font-size { width: 60px; margin-right: 1px; }

.grow-a {
  position: relative;
  width: 25px;
  text-align: center;
  font-size: 17px;
}

.grow-a.small {
  font-size: 15px;
}

.grow-a i {
  position: absolute;
  right: 3px;
  top: 2px;
  border: 3px solid transparent;
  border-bottom: 3px solid #1f5f9f;
  border-top: 0;
}

.grow-a.small i {
  transform: rotate(180deg);
}

.row-two {
  padding: 12px 0 0 4px;
}

.fmt {
  width: 27px;
  font-size: 16px;
  font-family: "Liberation Sans", sans-serif;
  text-align: center;
}

.row-two u.fmt {
  width: 22px;
  font-weight: bold;
}

.row-two .caret {
  margin: 0 6px 0 2px;
}

.rule {
  width: 1px;
  height: 22px;
  background: #8a8a8a;
  margin: 0 8px 0 4px;
}

.rule.wide {
  margin-right: 12px;
}

.swatch-icon {
  width: 21px;
  display: flex;
  flex-direction: column;
  align-items: center;
  height: 24px;
  justify-content: flex-end;
  margin-right: 2px;
}

.swatch {
  display: block;
  width: 20px;
  height: 5px;
}

.yellow { background: #ff0; }
.red { background: #f00; }

.color-a {
  font-weight: bold;
  font-size: 17px;
  line-height: 18px;
  font-family: "Liberation Sans", sans-serif;
}

.align-grid {
  display: grid;
  grid-template-columns: 26px 26px 26px 28px 26px 10px 26px 16px;
  grid-template-rows: 27px 27px;
  align-items: center;
  justify-items: center;
  align-content: start;
  padding: 10px 0 0 5px;
  row-gap: 9px;
}

.orient-caret {
  justify-self: start;
  margin-left: 2px;
}

.align-grid .sep {
  grid-row: span 2;
  width: 1px;
  height: 56px;
  background: #4a4a4a;
}

.lines {
  width: 26px;
  height: 27px;
  display: block;
  background-repeat: no-repeat;
  background-size: 18px 1px, 14px 1px, 18px 1px;
  background-image: linear-gradient(#333, #333), linear-gradient(#333, #333), linear-gradient(#333, #333);
}

.lines.top { background-position: 4px 5px, 6px 8px, 4px 11px; }
.lines.middle { background-position: 4px 9px, 6px 13px, 4px 17px; }
.lines.bottom { background-position: 4px 15px, 6px 19px, 4px 22px; }

.lines.on {
  background-color: #8d8d8d;
}

.lines.left, .lines.center, .lines.right {
  background-image: linear-gradient(#333, #333), linear-gradient(#333, #333), linear-gradient(#333, #333), linear-gradient(#333, #333);
  background-size: 14px 1px, 14px 1px, 14px 1px, 14px 1px;
  background-position: 6px 8px, 6px 12px, 6px 16px, 6px 20px;
}

.general {
  width: 91px;
  margin: 0 0 0 5px;
  flex: none;
}

.num-row {
  padding: 0 0 0 8px;
  gap: 5px;
  height: 29px;
}

.percent {
  font-size: 18px;
  margin-left: 6px;
}

.comma {
  font-size: 20px;
  line-height: 14px;
  font-weight: bold;
  margin-left: 7px;
}

.dec-row {
  gap: 14px;
  padding-left: 9px;
}

.dec {
  font-size: 10px;
  line-height: 11px;
  width: 24px;
}

.dec em {
  color: #1f5f9f;
  font-style: normal;
  font-weight: bold;
}

.list {
  flex-direction: column;
  padding: 0 0 0 8px;
  margin-top: -1px;
}

.list-item {
  height: 27px;
  display: flex;
  align-items: center;
  gap: 4px;
  white-space: nowrap;
}

.edit-body {
  padding-left: 6px;
}

.edit-tools {
  width: 39px;
  display: flex;
  flex-direction: column;
  padding-top: 1px;
}

.edit-tools .with-caret {
  height: 27px;
}

.sigma {
  width: 18px;
  font-size: 22px;
  line-height: 22px;
  font-weight: bold;
  text-align: center;
  font-family: "Liberation Sans", sans-serif;
}

.big-tool {
  display: flex;
  flex-direction: column;
  align-items: center;
  line-height: 20px;
  white-space: nowrap;
}

.big-tool svg {
  height: 39px;
  margin: 1px 0 5px;
}

.big-tool .caret {
  vertical-align: middle;
}

.sort { width: 50px; }
.find { width: 58px; margin-left: -3px; }

.az {
  font-size: 19px;
  font-weight: bold;
  font-family: "Liberation Sans", sans-serif;
}

.az.a { fill: #2a6099; }
.az.z { fill: #7a3ea0; }

.collapse {
  position: absolute;
  right: 13px;
  bottom: 7px;
}

.formula-bar {
  height: 54px;
  display: flex;
  align-items: center;
  padding-top: 1px;
  background: #666;
}

.name-box {
  width: 123px;
  height: 30px;
  display: flex;
  align-items: center;
  justify-content: space-between;
  padding: 0 9px 0 3px;
  background: #b0b0b0;
  border: 1px solid #444;
  border-left: 0;
  color: #555;
  font-size: 15px;
}

.vdots {
  flex: none;
  width: 3px;
  height: 13px;
  margin: 0 17px 0 17px;
  background: repeating-linear-gradient(#fff 0 3px, transparent 3px 5px);
}

.fx-btns {
  width: 137px;
  height: 30px;
  display: flex;
  align-items: center;
  gap: 30px;
  padding-left: 14px;
  margin-right: 3px;
  background: #b0b0b0;
  border: 1px solid #444;
}

.fx {
  font-family: "Liberation Serif", serif;
  font-style: italic;
  font-size: 18px;
  color: #8d8d8d;
  margin-left: -3px;
}

.formula-input {
  width: 809px;
  height: 30px;
  display: flex;
  align-items: center;
  justify-content: flex-end;
  padding-right: 6px;
  background: #b0b0b0;
  border: 1px solid #444;
}

.sheet {
  height: 745px;
  display: flex;
  overflow: hidden;
}

.grid-wrap {
  width: 1091px;
  overflow: hidden;
}

.grid {
  width: 1091px;
  table-layout: fixed;
  border-collapse: separate;
  border-spacing: 0;
}

.c-hd { width: 24px; }
.c-b { width: 256px; }
.c-c { width: 127px; }
.c-d { width: 199px; }
.c-e { width: 110px; }
.c-f { width: 217px; }
.c-g { width: 114px; }
.c-h { width: 44px; }

.grid th {
  padding: 0;
  background: #666;
  color: #eee;
  font-weight: normal;
  font-size: 16px;
}

.grid thead th {
  height: 23px;
  border-left: 1px solid #a8a8a8;
  border-bottom: 2px solid #e8e8e8;
}

.grid thead th.corner {
  border-left: 0;
  background: linear-gradient(135deg, transparent 50%, #eee 50%) 3px 3px / 18px 17px no-repeat #666;
}

.grid thead th.cur {
  background: #262626;
  border-bottom: 2px solid #217346;
}

.grid tbody th {
  height: 25px;
  text-align: left;
  padding-left: 3px;
  border-bottom: 1px solid #c4c4c4;
}

.grid tbody th.cur {
  background: #262626;
}

.grid td {
  height: 25px;
  padding: 0 0 1px 3px;
  overflow: hidden;
  white-space: nowrap;
  background: #fff;
  color: #111;
  font-size: 15px;
  border-left: 1px solid #d4d4d4;
  border-bottom: 1px solid #d4d4d4;
}

.grid tbody td:nth-child(2) {
  font-size: 15.500px;
  letter-spacing: .35px;
}

.grid td.selected {
  position: relative;
  overflow: visible;
  outline: 2px solid #217346;
  outline-offset: -1px;
}

.grid td.selected::after {
  content: "";
  position: absolute;
  right: -3px;
  bottom: -3px;
  width: 6px;
  height: 6px;
  background: #217346;
  border: 1px solid #fff;
}

.vscroll {
  width: 18px;
  margin: 3px 0 0 3px;
  display: flex;
  flex-direction: column;
  background: #5a5a5a;
}

.sb-btn {
  flex: none;
  display: flex;
  align-items: center;
  justify-content: center;
  width: 18px;
  height: 18px;
  background: #9b9b9b;
  border: 1px solid #444;
}

.sb-thumb {
  height: 487px;
  margin-bottom: auto;
  background: #9b9b9b;
  border: 1px solid #444;
}

.tri {
  display: block;
  width: 0;
  height: 0;
  border: 5px solid transparent;
}

.tri.up { border-top: 0; border-bottom-color: #333; }
.tri.down { border-bottom: 0; border-top-color: #333; }
.tri.left { border-left: 0; border-right-color: #333; }
.tri.right { border-right: 0; border-left-color: #333; }
.tri.dim.left { border-right-color: #999; }
.tri.dim.right { border-left-color: #999; }
.tri.grey.up { border-bottom-color: #777; }
.tri.grey.down { border-top-color: #777; }

.sheet-tabs {
  height: 29px;
  display: flex;
  align-items: flex-start;
  background: linear-gradient(#6e6e6e, #666);
  border-bottom: 1px solid #484848;
}

.nav-arrows {
  width: 94px;
  height: 28px;
  display: flex;
  align-items: center;
  gap: 23px;
  padding-left: 17px;
}

.sheet-tab {
  width: 77px;
  height: 25px;
  text-align: center;
  background: #fff;
  border-bottom: 2px solid #217346;
  color: #217346;
  font-weight: bold;
  font-size: 15px;
  line-height: 21px;
}

.add-sheet {
  width: 20px;
  height: 20px;
  margin: 4px 0 0 34px;
  border: 1px solid #eee;
  border-radius: 50%;
  color: #eee;
  text-align: center;
  font-size: 17px;
  line-height: 16px;
  font-weight: bold;
}

.tabs-dots {
  margin: 8px 0 0 438px;
}

.hscroll {
  display: flex;
  width: 410px;
  margin: 5px 0 0 -2px;
  height: 19px;
}

.hscroll .sb-btn {
  width: 19px;
  height: 19px;
}

.hs-track {
  flex: 1;
  background: #5a5a5a;
  padding-left: 37px;
}

.hs-thumb {
  display: block;
  width: 260px;
  height: 19px;
  background: #9b9b9b;
  border: 1px solid #444;
}

.tabs-dots {
  margin-right: 17px;
}

.status-bar {
  height: 28px;
  display: flex;
  align-items: center;
  padding-bottom: 1px;
  background: #5a5a5a;
  color: #eee;
  font-size: 12.500px;
}

.ready {
  width: 764px;
}

.view-btn {
  width: 41px;
  height: 28px;
  display: flex;
  align-items: center;
  justify-content: center;
}

.view-btn.on {
  background: #444;
}

.zoom-minus {
  width: 9px;
  height: 2px;
  margin: 0 4px 0 6px;
  background: #fff;
}

.zoom-track {
  position: relative;
  width: 125px;
  height: 1px;
  background: #eee;
}

.zoom-track i {
  position: absolute;
  left: 60px;
  top: -7px;
  width: 5px;
  height: 15px;
  background: #fff;
}

.zoom-plus {
  width: 20px;
  text-align: center;
  font-size: 18px;
  line-height: 20px;
  font-weight: bold;
}

.zoom-pct {
  margin-left: 13px;
  font-size: 12px;
}

/* Chrome */
.chrome {
  flex: 1;
  display: flex;
  flex-direction: column;
  min-width: 0;
}

.tab-strip {
  height: 54px;
  display: flex;
  align-items: flex-end;
  padding-left: 10px;
  background: #5cb8c0;
  border-top: 1px solid #4a7f86;
}

.c-tab {
  width: 300px;
  height: 42px;
  display: flex;
  align-items: center;
  gap: 10px;
  padding: 0 14px 0 16px;
  background: #b8e2e6;
  border-radius: 9px 9px 0 0;
  color: #333;
  font-size: 13.500px;
}

.c-tab-title {
  flex: 1;
  overflow: hidden;
  white-space: nowrap;
  -webkit-mask-image: linear-gradient(90deg, #000 88%, transparent);
  mask-image: linear-gradient(90deg, #000 88%, transparent);
}

.new-tab {
  margin: 0 0 13px 20px;
}

.c-win {
  margin-left: auto;
  display: flex;
  align-items: center;
  align-self: center;
  gap: 43px;
  padding: 0 26px 12px 0;
}

.toolbar {
  height: 44px;
  display: flex;
  align-items: center;
  padding-left: 19px;
  gap: 25px;
  background: #b8e2e6;
}

.omnibox {
  width: 483px;
  height: 35px;
  margin-left: -6px;
  display: flex;
  align-items: center;
  padding: 0 14px 0 15px;
  background: #ecf8f8;
  border-radius: 18px;
  font-size: 16px;
  color: #222;
}

.not-secure {
  margin-left: 12px;
  padding-right: 11px;
  border-right: 1px solid #777;
  color: #5f6368;
  line-height: 22px;
}

.url {
  margin-left: 12px;
}

.omni-icons {
  margin-left: auto;
  display: flex;
  gap: 22px;
  align-items: center;
}

.first-ext {
  margin: 0 -2px 0 -7px;
}

.avatar {
  width: 28px;
  height: 28px;
  margin-left: -7px;
  border-radius: 50%;
  background: #0a84d6;
  color: #fff;
  text-align: center;
  font-size: 14px;
  line-height: 28px;
}

.menu-dots {
  width: 4px;
  height: 16px;
  margin-left: -2px;
  background: radial-gradient(circle, #222 2px, transparent 2.100px) 0 0 / 4px 6px;
}

.bookmarks {
  height: 41px;
  display: flex;
  align-items: center;
  padding: 0 0 2px 19px;
  gap: 23px;
  background: #b8e2e6;
  border-bottom: 1px solid #9cc4c8;
  color: #333;
  font-size: 14px;
}

.bm {
  display: flex;
  align-items: center;
  gap: 10px;
  white-space: nowrap;
}

.h8 {
  width: 18px;
  font-family: "Liberation Serif", serif;
  font-style: italic;
  font-size: 20px;
  line-height: 20px;
}

.h8 sup {
  font-size: 10px;
}

.g-ico {
  width: 20px;
  height: 22px;
  background: #333;
  color: #e0a93f;
  text-align: center;
  font-weight: bold;
  font-size: 16px;
  line-height: 22px;
}

.page {
  position: relative;
  flex: 1;
  min-height: 0;
  display: flex;
  justify-content: space-between;
  padding-top: 36px;
  background: #7f7f7f;
  overflow: hidden;
}

.behind {
  position: absolute;
  left: 13px;
  top: 7px;
  width: 745px;
  height: 40px;
  padding: 20px 0 0 7px;
  display: flex;
  border-top: 1px solid #6e6e6e;
  color: #3a3a3a;
  font-size: 19px;
  white-space: nowrap;
}

.behind-sem {
  width: 110px;
}

.behind-date {
  position: absolute;
  left: 623px;
  top: 0;
  padding: 20px 0 0 12px;
  height: 40px;
  border-left: 1px solid #6e6e6e;
}

.modal {
  position: relative;
  width: 749px;
  height: 900px;
  padding: 0 4px;
  background: #fff;
  border-radius: 5px 5px 0 0;
  color: #212529;
}

.modal-head {
  height: 109px;
  display: flex;
  justify-content: space-between;
  padding: 24px 17px 0 17px;
}

.modal-head h1 {
  margin: 0;
  font-size: 28.200px;
  line-height: 40px;
  font-weight: 500;
}

.modal-close {
  margin-top: -2px;
  font-size: 33px;
  line-height: 32px;
  font-weight: bold;
  color: #777;
}

.info {
  display: flex;
  flex-direction: column;
  gap: 3px;
}

.info-row {
  display: grid;
  grid-template-columns: 371px 1fr;
  align-items: end;
  padding: 6px 30px 6px 7px;
  background: #d9e7e7;
  font-size: 18.600px;
  line-height: 30px;
  color: #333;
}

.info-row mark {
  background: #c4c4c4;
  color: #333;
}

.marks {
  width: 741px;
  margin-top: 15px;
  table-layout: fixed;
  border-collapse: collapse;
  font-size: 16px;
  line-height: 24px;
  font-weight: 600;
}

.m-code { width: 93px; }
.m-name { width: 346px; }
.m-grade { width: 78px; }
.m-point { width: 64px; }
.m-credit { width: 54px; }
.m-cxg { width: 50px; }
.m-status { width: 56px; }

.marks th {
  padding: 0 2px;
  background: #343a40;
  color: #fff;
  font-size: 15.200px;
  text-align: left;
  vertical-align: top;
  font-weight: bold;
}

.marks th:nth-child(2), .marks td:nth-child(2) {
  padding-left: 4px;
}

.marks td {
  padding: 0 3px;
  vertical-align: top;
  border-top: 1px solid #dee2e6;
}

.marks tr.tall td {
  padding-bottom: 1px;
}

.marks thead th {
  height: 73px;
}

.marks tbody tr:nth-child(odd) {
  background: #f0f0f0;
}

.marks tbody tr:nth-child(even) {
  background: #fdfdfd;
}

.marks .mid {
  text-align: center;
}

.marks td.fail, .marks td.pass {
  padding: 0;
  font-size: 15px;
}

.fail { color: #f00; }
.pass { color: #008000; }

.sgpa {
  margin-top: 20px;
  height: 43px;
  display: grid;
  grid-template-columns: 1fr 1fr;
  align-items: center;
  text-align: center;
  background: #d9e7e7;
  font-size: 18.600px;
  color: #444;
}

.disclaimer {
  margin: 22px 0 0 2px;
  font-size: 19px;
  font-weight: bold;
  line-height: 28px;
}

.page-scroll {
  position: relative;
  width: 23px;
  display: flex;
  flex-direction: column;
  align-items: center;
  margin-top: -36px;
  padding-top: 5px;
  background: #f0f0f0;
}

.page-thumb {
  width: 19px;
  height: 672px;
  margin: 8px 0 auto;
  background: #bbb;
}

.page-scroll .tri.down {
  margin-bottom: 5px;
}

/* taskbar */
.taskbar {
  height: 40px;
  display: flex;
  align-items: center;
  background: #1c1c1c;
  color: #fff;
}

.start {
  margin: 0 15px 0 12px;
}

.task {
  width: 46px;
  height: 40px;
  display: flex;
  align-items: center;
  justify-content: center;
  padding-bottom: 3px;
}

.task.open {
  background: linear-gradient(#a6d4f2, #a6d4f2) center bottom / 35px 3px no-repeat;
}

.task.active {
  background: linear-gradient(#a6d4f2, #a6d4f2) center bottom / 100% 3px no-repeat #444;
}

.tray {
  margin-left: auto;
  display: flex;
  align-items: center;
  gap: 13px;
  padding-right: 31px;
  font-size: 13.500px;
}

.help {
  width: 28px;
  height: 28px;
  margin-right: -2px;
  border: 2px solid #fff;
  border-radius: 50%;
  background: #1a9ade;
  text-align: center;
  font-size: 20px;
  line-height: 24px;
  font-weight: bold;
}

.clock {
  margin-left: 5px;
}

.notif {
  margin-left: 12px;
}
```
